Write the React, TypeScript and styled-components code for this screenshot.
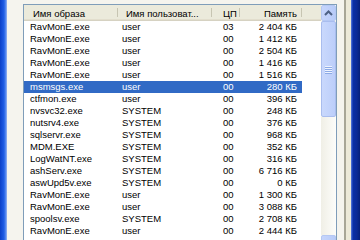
import styled, { createGlobalStyle } from 'styled-components';

interface Proc {
  name: string;
  user: string;
  cpu: string;
  mem: string;
}

interface Column {
  key: keyof Proc;
  title: string;
  width: number;
  align: 'left' | 'right';
  headPad: number;
  cellPad: number;
}

const columns: Column[] = [
  { key: 'name', title: 'Имя образа', width: 94, align: 'left', headPad: 9, cellPad: 6 },
  { key: 'user', title: 'Имя пользоват...', width: 94, align: 'left', headPad: 8, cellPad: 4 },
  { key: 'cpu', title: 'ЦП', width: 28, align: 'left', headPad: 11, cellPad: 11 },
  { key: 'mem', title: 'Память', width: 62, align: 'right', headPad: 5, cellPad: 5 },
];

const procs: Proc[] = [
  { name: 'RavMonE.exe', user: 'user', cpu: '03', mem: '2 404 КБ' },
  { name: 'RavMonE.exe', user: 'user', cpu: '00', mem: '1 412 КБ' },
  { name: 'RavMonE.exe', user: 'user', cpu: '00', mem: '2 504 КБ' },
  { name: 'RavMonE.exe', user: 'user', cpu: '00', mem: '1 416 КБ' },
  { name: 'RavMonE.exe', user: 'user', cpu: '00', mem: '1 516 КБ' },
  { name: 'msmsgs.exe', user: 'user', cpu: '00', mem: '280 КБ' },
  { name: 'ctfmon.exe', user: 'user', cpu: '00', mem: '396 КБ' },
  { name: 'nvsvc32.exe', user: 'SYSTEM', cpu: '00', mem: '248 КБ' },
  { name: 'nutsrv4.exe', user: 'SYSTEM', cpu: '00', mem: '376 КБ' },
  { name: 'sqlservr.exe', user: 'SYSTEM', cpu: '00', mem: '968 КБ' },
  { name: 'MDM.EXE', user: 'SYSTEM', cpu: '00', mem: '352 КБ' },
  { name: 'LogWatNT.exe', user: 'SYSTEM', cpu: '00', mem: '316 КБ' },
  { name: 'ashServ.exe', user: 'SYSTEM', cpu: '00', mem: '6 716 КБ' },
  { name: 'aswUpd5v.exe', user: 'SYSTEM', cpu: '00', mem: '0 КБ' },
  { name: 'RavMonE.exe', user: 'user', cpu: '00', mem: '1 300 КБ' },
  { name: 'RavMonE.exe', user: 'user', cpu: '00', mem: '3 088 КБ' },
  { name: 'spoolsv.exe', user: 'SYSTEM', cpu: '00', mem: '2 708 КБ' },
  { name: 'RavMonE.exe', user: 'user', cpu: '00', mem: '2 444 КБ' },
];

const SELECTED = 5;

const GlobalStyle = createGlobalStyle`
  html, body {
    margin: 0;
    padding: 0;
    background: #ece9d8;
  }
  * {
    box-sizing: border-box;
  }
`;

const App = () => {
  return (
    <>
      <GlobalStyle />
      <Screen>
        <FrameLeft />
        <Dialog>
          <TabPage>
            <ListView>
              <Table>
                <HeaderRow>
                  {columns.map(col => (
                    <HeaderCell
                      key={col.key}
                      $width={col.width}
                      $align={col.align}
                      $pad={col.headPad}>
                      {col.title}
                    </HeaderCell>
                  ))}
                  <HeaderFiller />
                </HeaderRow>
                {procs.map((p, i) => (
                  <Row key={i} $selected={i === SELECTED}>
                    {columns.map(col => (
                      <Cell
                        key={col.key}
                        $width={col.width}
                        $align={col.align}
                        $pad={col.cellPad}>
                        {p[col.key]}
                      </Cell>
                    ))}
                  </Row>
                ))}
              </Table>
              <ScrollBar>
                <ArrowButton>
                  <svg width='9' height='6' viewBox='0 0 9 6'>
                    <path d='M1 5 L4.5 1.5 L8 5' fill='none' stroke='#4d6185' strokeWidth='2' />
                  </svg>
                </ArrowButton>
                <Thumb>
                  <Grip>
                    <span />
                    <span />
                    <span />
                    <span />
                  </Grip>
                </Thumb>
                <Track />
                <ArrowButton>
                  <svg width='9' height='6' viewBox='0 0 9 6'>
                    <path d='M1 1 L4.5 4.5 L8 1' fill='none' stroke='#4d6185' strokeWidth='2' />
                  </svg>
                </ArrowButton>
              </ScrollBar>
            </ListView>
          </TabPage>
        </Dialog>
        <FrameRight />
      </Screen>
    </>
  );
};

export default App;

const Screen = styled.div`
  display: flex;
  width: 360px;
  height: 240px;
  overflow: hidden;
  font-family: 'Liberation Sans', Arial, sans-serif;
  font-size: 9.5px;
  color: #000;
`;

const FrameLeft = styled.div`
  flex: 0 0 7px;
  background: linear-gradient(to right, #0a3fc8 0px, #1f5ee6 4px, #5f8ff0 6px, #9db8f2 7px);
`;

const FrameRight = styled.div`
  flex: 0 0 9px;
  background: linear-gradient(to right, #5a7fe0 0px, #0a2fa8 2px, #0b2a94 6px, #06207a 9px);
`;

const Dialog = styled.div`
  flex: 1 1 auto;
  display: flex;
  padding-right: 5px;
  background: #ece9d8;
`;

const TabPage = styled.div`
  flex: 1 1 auto;
  padding: 4px 7px 0 16px;
  background: #f5f4ee;
  border-right: 2px solid #a8a697;
`;

const ListView = styled.div`
  display: flex;
  width: 314px;
  height: 300px;
  border: 1px solid #7f9db9;
  background: #fff;
`;

const Table = styled.div`
  flex: 1 1 auto;
  display: flex;
  flex-direction: column;
`;

const HeaderRow = styled.div`
  display: flex;
  height: 16px;
  background: #ebeadb;
  box-shadow: inset 0 -1px 0 #d6d2c2, inset 0 -2px 0 #e2decd;
`;

const HeaderCell = styled.div<{ $width: number; $align: string; $pad: number }>`
  position: relative;
  flex: 0 0 ${({ $width }) => $width}px;
  display: flex;
  align-items: center;
  justify-content: ${({ $align }) => ($align === 'right' ? 'flex-end' : 'flex-start')};
  padding: 0 ${({ $align, $pad }) => ($align === 'right' ? `${$pad}px 0 0` : `0 0 ${$pad}px`)};
  white-space: nowrap;
  overflow: hidden;
  &::after {
    content: '';
    position: absolute;
    right: 0;
    top: 3px;
    bottom: 4px;
    width: 1px;
    background: #c7c5b2;
    box-shadow: 1px 0 0 #fff;
  }
`;

const HeaderFiller = styled.div`
  flex: 1 1 auto;
`;

const Row = styled.div<{ $selected: boolean }>`
  display: flex;
  height: 12px;
  width: 278px;
  align-items: center;
  background: ${({ $selected }) => ($selected ? '#316ac5' : 'transparent')};
  color: ${({ $selected }) => ($selected ? '#fff' : '#000')};
`;

const Cell = styled.div<{ $width: number; $align: string; $pad: number }>`
  flex: 0 0 ${({ $width }) => $width}px;
  text-align: ${({ $align }) => $align};
  padding: ${({ $align, $pad }) => ($align === 'right' ? `0 ${$pad}px 0 0` : `0 0 0 ${$pad}px`)};
  white-space: nowrap;
  overflow: hidden;
  line-height: 12px;
`;

const ScrollBar = styled.div`
  flex: 0 0 15px;
  display: flex;
  flex-direction: column;
  background: #f7f6f0;
`;

const ArrowButton = styled.div`
  flex: 0 0 16px;
  display: flex;
  align-items: center;
  justify-content: center;
  background: linear-gradient(to right, #c6d5fc, #b8cbf8);
  border: 1px solid #b5c8f3;
  border-radius: 2px;
`;

const Thumb = styled.div`
  flex: 0 0 96px;
  display: flex;
  align-items: center;
  justify-content: center;
  background: linear-gradient(to right, #c9d8fc, #bccefa);
  border: 1px solid #a9bdee;
  border-radius: 2px;
`;

const Grip = styled.div`
  display: flex;
  flex-direction: column;
  gap: 1px;
  span {
    display: block;
    width: 7px;
    height: 1px;
    background: #eef3fe;
    box-shadow: 0 1px 0 #8caae6;
  }
`;

const Track = styled.div`
  flex: 0 0 118px;
  background: linear-gradient(to right, #f0efe6, #fdfdfa);
`;
